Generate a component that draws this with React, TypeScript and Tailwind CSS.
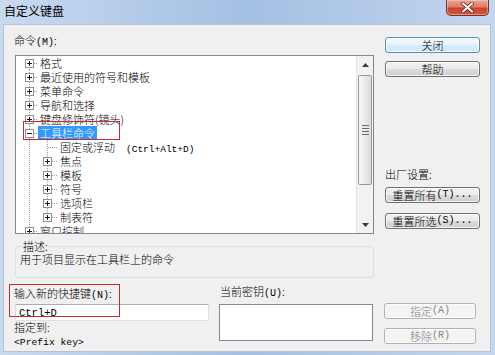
import React from "react";

const DOT = "#a0a0a0";

function Mono({ children, size = "text-[10px]" }: { children: React.ReactNode; size?: string }) {
  return <span className={`font-['Liberation_Mono',monospace] font-normal ${size}`}>{children}</span>;
}

type RowKind = "root-plus" | "root-minus" | "child-plus" | "child-leaf" | "child-last";

function Box({ x, minus }: { x: number; minus?: boolean }) {
  return (
    <>
      <rect x={x + 0.5} y={3.5} width={8} height={8} fill="#ffffff" stroke="#919191" />
      <line x1={x + 2} y1={7.5} x2={x + 7} y2={7.5} stroke="#1a1a1a" />
      {!minus && <line x1={x + 4.5} y1={5} x2={x + 4.5} y2={10} stroke="#1a1a1a" />}
    </>
  );
}

function Connector({ kind, first }: { kind: RowKind; first?: boolean }) {
  if (kind === "root-plus" || kind === "root-minus") {
    return (
      <svg width={22} height={14} shapeRendering="crispEdges" className="shrink-0">
        <line x1={13.5} y1={first ? 7 : 0} x2={13.5} y2={14} stroke={DOT} strokeDasharray="1 1" />
        <line x1={18} y1={7.5} x2={22} y2={7.5} stroke={DOT} strokeDasharray="1 1" />
        <Box x={9} minus={kind === "root-minus"} />
      </svg>
    );
  }
  const last = kind === "child-last";
  const leaf = kind === "child-leaf";
  return (
    <svg width={42} height={14} shapeRendering="crispEdges" className="shrink-0">
      <line x1={13.5} y1={0} x2={13.5} y2={14} stroke={DOT} strokeDasharray="1 1" />
      <line x1={31.5} y1={0} x2={31.5} y2={last ? 8 : 14} stroke={DOT} strokeDasharray="1 1" />
      <line x1={leaf ? 32 : 36} y1={7.5} x2={42} y2={7.5} stroke={DOT} strokeDasharray="1 1" />
      {!leaf && <Box x={27} />}
    </svg>
  );
}

function Row({ kind, first, selected, children }: { kind: RowKind; first?: boolean; selected?: boolean; children: React.ReactNode }) {
  return (
    <div className="flex h-[14px] items-center">
      <Connector kind={kind} first={first} />
      <span className={`h-[14px] whitespace-nowrap px-[2px] leading-[14px] ${selected ? "bg-[#3399ff] text-white" : ""}`}>
        {children}
      </span>
    </div>
  );
}

function Btn({ children, variant = "normal", className = "" }: { children: React.ReactNode; variant?: "normal" | "default" | "disabled"; className?: string }) {
  const styles =
    variant === "default"
      ? "border-[#4d94c8] bg-[linear-gradient(#f4fafe_0%,#e6f3fc_50%,#d8edfa_50%,#cfe8f8_100%)] text-black"
      : variant === "disabled"
      ? "border-[#adb2b5] bg-[#f4f4f4] text-[#838383]"
      : "border-[#707070] bg-[linear-gradient(#f2f2f2_0%,#ebebeb_50%,#dddddd_50%,#cfcfcf_100%)] text-black";
  return (
    <div
      className={`flex h-[16px] items-center justify-center rounded-[3px] border shadow-[inset_0_0_0_1px_rgba(255,255,255,0.75)] leading-[12px] ${styles} ${className}`}
    >
      {children}
    </div>
  );
}

function Arrow({ up }: { up?: boolean }) {
  return (
    <svg width={7} height={4} className="shrink-0">
      {up ? <path d="M0 4 L3.5 0 L7 4 Z" fill="#3a3a3a" /> : <path d="M0 0 L3.5 4 L7 0 Z" fill="#3a3a3a" />}
    </svg>
  );
}

export default function App() {
  return (
    <div className="relative h-[355px] w-[495px] overflow-hidden bg-linear-to-r from-[#c8daf0] via-[#a3bfe3] to-[#c3d7ee] font-['Noto_Sans_CJK_SC',sans-serif] text-[11px] font-light leading-[12px] text-black">
      {/* title bar */}
      <div className="flex h-[24px] items-start justify-between">
        <div className="pl-[4px] pt-[3px] text-[12px] font-normal leading-[15px]">自定义键盘</div>
        <div className="mr-[6px] flex h-[16px] w-[43px] items-center justify-center rounded-b-[5px] border border-t-0 border-[#7d3124] bg-[linear-gradient(#eaa597_0%,#de7d68_45%,#c8452c_55%,#d0573c_100%)] shadow-[inset_0_0_0_1px_rgba(255,220,210,0.45)]">
          <svg width={13} height={11} viewBox="0 0 13 11">
            <path d="M2 1.5 L11 9.5 M11 1.5 L2 9.5" stroke="#5a1d12" strokeWidth={3.6} strokeLinecap="round" />
            <path d="M2 1.5 L11 9.5 M11 1.5 L2 9.5" stroke="#ffffff" strokeWidth={2.2} strokeLinecap="round" />
          </svg>
        </div>
      </div>

      {/* client area */}
      <div className="ml-[3px] flex h-[328px] w-[488px] flex-col border border-[#b3c4d9] bg-[#f0f0f0]">
        <div className="flex pl-[10px]">
          {/* left column */}
          <div className="flex w-[360px] flex-col">
            <div className="mt-[9px]">
              命令<Mono>(M)</Mono>:
            </div>
            <div className="ml-[1px] mt-[6px] flex h-[179px] w-[359px] border border-[#828790] bg-white">
              <div className="flex-1 overflow-hidden">
                <Row kind="root-plus" first>格式</Row>
                <Row kind="root-plus">最近使用的符号和模板</Row>
                <Row kind="root-plus">菜单命令</Row>
                <Row kind="root-plus">导航和选择</Row>
                <Row kind="root-plus">键盘修饰符(镜头)</Row>
                <Row kind="root-minus" selected>工具栏命令</Row>
                <Row kind="child-leaf">
                  固定或浮动<span className="ml-[11px]"><Mono size="text-[9.5px]">(Ctrl+Alt+D)</Mono></span>
                </Row>
                <Row kind="child-plus">焦点</Row>
                <Row kind="child-plus">模板</Row>
                <Row kind="child-plus">符号</Row>
                <Row kind="child-plus">选项栏</Row>
                <Row kind="child-last">制表符</Row>
                <Row kind="root-plus">窗口控制</Row>
              </div>
              {/* scrollbar */}
              <div className="flex w-[17px] flex-col border-l border-[#e3e3e3] bg-[#f2f2f2]">
                <div className="flex h-[17px] items-center justify-center">
                  <Arrow up />
                </div>
                <div className="mx-[1px] mt-[2px] flex h-[110px] flex-col items-center justify-center gap-[2px] rounded-[2px] border border-[#979797] bg-linear-to-r from-[#f7f7f7] to-[#dcdcdc]">
                  <div className="h-px w-[7px] bg-[#6d6d6d]" />
                  <div className="h-px w-[7px] bg-[#6d6d6d]" />
                  <div className="h-px w-[7px] bg-[#6d6d6d]" />
                  <div className="h-px w-[7px] bg-[#6d6d6d]" />
                </div>
                <div className="flex-1" />
                <div className="flex h-[17px] items-center justify-center">
                  <Arrow />
                </div>
              </div>
            </div>
            <fieldset className="ml-[1px] mt-[6px] w-[359px] rounded-[3px] border border-[#d5dfe5] px-[4px] pb-[12px]">
              <legend className="ml-[2px] px-[1px] leading-[12px]">描述:</legend>
              <div className="mt-[1px]">用于项目显示在工具栏上的命令</div>
            </fieldset>
          </div>

          {/* right column */}
          <div className="ml-[11px] mt-[12px] flex w-[95px] flex-col">
            <Btn variant="default">关闭</Btn>
            <Btn className="mt-[8px]">帮助</Btn>
            <div className="mt-[91px]">出厂设置:</div>
            <Btn className="mt-[7px]">
              重置所有<Mono>(T)...</Mono>
            </Btn>
            <Btn className="mt-[10px]">
              重置所选<Mono>(S)...</Mono>
            </Btn>
          </div>
        </div>

        {/* bottom row */}
        <div className="flex pl-[10px]">
          <div className="flex w-[195px] flex-col">
            <div className="mt-[9px]">
              输入新的快捷键<Mono>(N)</Mono>:
            </div>
            <div className="ml-[1px] mt-[2px] flex h-[17px] w-[194px] items-center border border-[#dbdfe6] border-t-[#abadb3] bg-white pl-[3px]">
              <Mono size="text-[10.5px]">Ctrl+D</Mono>
            </div>
            <div>指定到:</div>
            <div className="mt-[1px]">
              <Mono size="text-[9.7px]">&lt;Prefix key&gt;</Mono>
            </div>
          </div>
          <div className="ml-[10px] flex w-[154px] flex-col">
            <div className="mt-[7px] pl-[1px]">
              当前密钥<Mono>(U)</Mono>:
            </div>
            <div className="mt-[4px] h-[37px] border border-[#828790] bg-white" />
          </div>
          <div className="ml-[11px] flex w-[92px] flex-col">
            <Btn variant="disabled" className="mt-[25px]">
              指定<Mono>(A)</Mono>
            </Btn>
            <Btn variant="disabled" className="mt-[9px]">
              移除<Mono>(R)</Mono>
            </Btn>
          </div>
        </div>
      </div>

      {/* red annotation rectangles */}
      <div className="absolute left-[23px] top-[121px] h-[19px] w-[97px] border border-[#c8282f]" />
      <div className="absolute left-[9px] top-[284px] h-[33px] w-[111px] border border-[#c8282f]" />
    </div>
  );
}
